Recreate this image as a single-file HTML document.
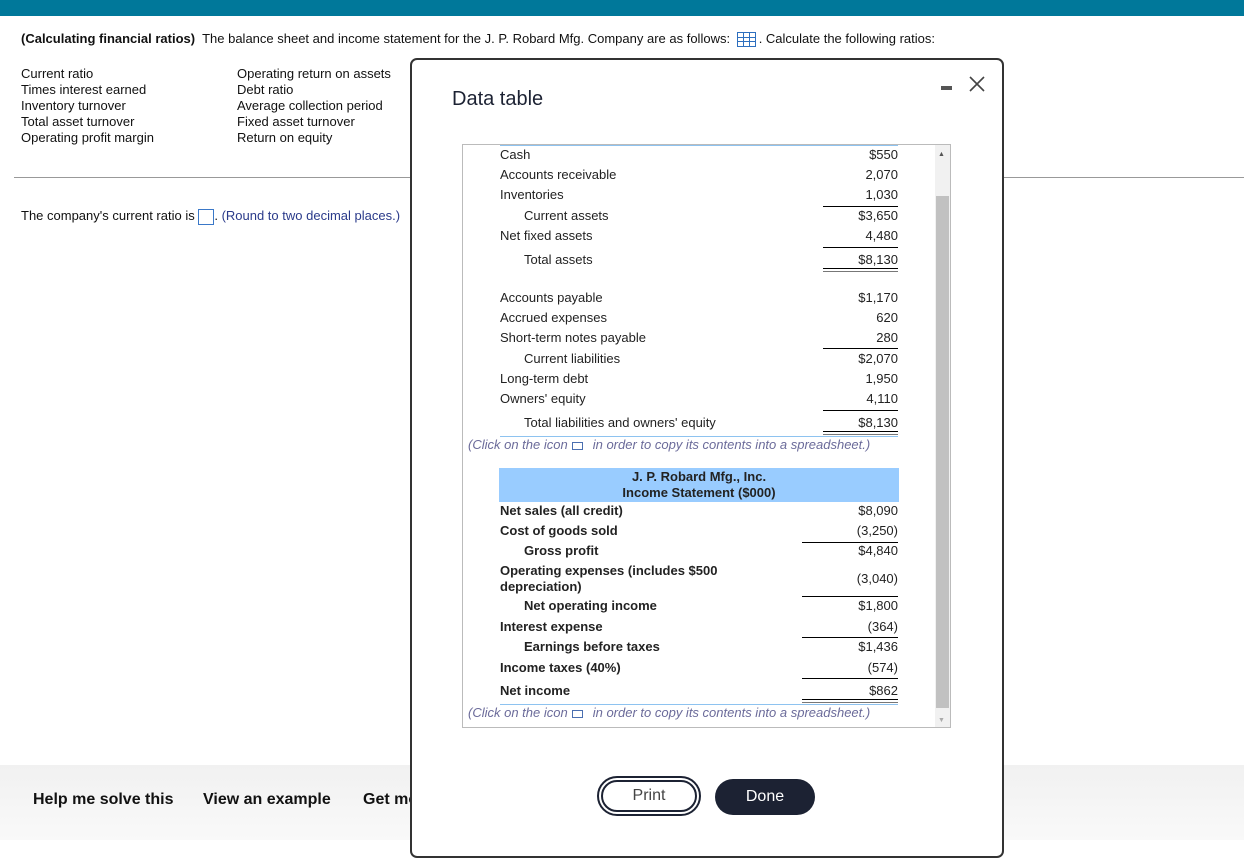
<!DOCTYPE html>
<html><head><meta charset="utf-8"><style>
body{margin:0;width:1244px;height:840px;position:relative;overflow:hidden;background:#fff;font-family:"Liberation Sans",Arial,sans-serif;color:#222;}
.a{position:absolute;white-space:nowrap;font-size:13px;line-height:16px;}
.r{text-align:right;width:120px;}
.ln{position:absolute;height:0;border-top:1px solid #000;}
.dl{position:absolute;height:2px;border-top:1px solid #000;border-bottom:1px solid #777;}
.b{font-weight:bold;}
.cl{position:absolute;font-size:13px;font-style:italic;color:#6b6b9a;white-space:nowrap;}
.ic{display:inline-block;width:9px;height:6px;border:1.5px solid #4a6fb0;margin:0 10px 0 4px;vertical-align:middle;}
</style></head><body>
<div style="position:absolute;left:0;top:0;width:1244px;height:16px;background:#00789a"></div>
<div class="a" style="left:21px;top:31px;color:#111"><b>(Calculating financial ratios)</b>&nbsp; The balance sheet and income statement for the J. P. Robard Mfg. Company are as follows: <span style="display:inline-block;width:17px;height:13px;border:1px solid #2d6fbf;background:linear-gradient(#2d6fbf,#2d6fbf) 0 4px/100% 1px no-repeat,linear-gradient(#2d6fbf,#2d6fbf) 0 8px/100% 1px no-repeat,linear-gradient(90deg,#2d6fbf,#2d6fbf) 5px 0/1px 100% no-repeat,linear-gradient(90deg,#2d6fbf,#2d6fbf) 11px 0/1px 100% no-repeat;vertical-align:middle;margin:0 3px"></span>. Calculate the following ratios:</div>
<div class="a" style="left:21px;top:66px;line-height:16px;color:#111">Current ratio<br>Times interest earned<br>Inventory turnover<br>Total asset turnover<br>Operating profit margin</div>
<div class="a" style="left:237px;top:66px;line-height:16px;color:#111">Operating return on assets<br>Debt ratio<br>Average collection period<br>Fixed asset turnover<br>Return on equity</div>
<div style="position:absolute;left:14px;top:177px;width:1230px;border-top:1px solid #999"></div>
<div class="a" style="left:21px;top:208px;color:#111">The company's current ratio is <span style="display:inline-block;width:16px;height:16px;border:1px solid #3a78c8;vertical-align:middle;box-sizing:border-box"></span>. <span style="color:#2a3a8a">(Round to two decimal places.)</span></div>
<div style="position:absolute;left:0;top:765px;width:1244px;height:75px;background:linear-gradient(#f1f1f1,#f9f9f9)"></div>
<div class="a b" style="left:33px;top:791px;font-size:16px;line-height:18px;color:#111">Help me solve this</div>
<div class="a b" style="left:203px;top:791px;font-size:16px;line-height:18px;color:#111">View an example</div>
<div class="a b" style="left:363px;top:791px;font-size:16px;line-height:18px;color:#111">Get more help</div>
<div style="position:absolute;left:410px;top:58px;width:594px;height:800px;background:#fff;border:2px solid #333;border-radius:7px;box-sizing:border-box"></div>
<div class="a" style="left:452px;top:88px;font-size:20px;line-height:22px;color:#1c2233">Data table</div>
<div style="position:absolute;left:941px;top:86px;width:11px;height:4px;background:#555"></div>
<svg style="position:absolute;left:968px;top:75px" width="18" height="18" viewBox="0 0 18 18"><path d="M2 2L16 16M16 2L2 16" stroke="#444" stroke-width="1.6" fill="none"/></svg>
<div style="position:absolute;left:462px;top:144px;width:489px;height:584px;border:1px solid #bbb;box-sizing:border-box"></div>
<div style="position:absolute;left:935px;top:145px;width:15px;height:582px;background:#f1f1f1"></div>
<div style="position:absolute;left:936px;top:196px;width:13px;height:512px;background:#c1c1c1"></div>
<div class="a" style="left:938px;top:147px;font-size:7px;color:#555">▲</div>
<div class="a" style="left:938px;top:713px;font-size:7px;color:#aaa">▼</div>
<div style="position:absolute;left:500px;top:145px;width:398px;border-top:1px solid #8ec3f0"></div>
<div class="a" style="left:500px;top:147px">Cash</div><div class="a r" style="left:778px;top:147px">$550</div>
<div class="a" style="left:500px;top:167px">Accounts receivable</div><div class="a r" style="left:778px;top:167px">2,070</div>
<div class="a" style="left:500px;top:187px">Inventories</div><div class="a r" style="left:778px;top:187px">1,030</div>
<div class="ln" style="left:823px;top:206px;width:75px"></div>
<div class="a" style="left:524px;top:208px">Current assets</div><div class="a r" style="left:778px;top:208px">$3,650</div>
<div class="a" style="left:500px;top:228px">Net fixed assets</div><div class="a r" style="left:778px;top:228px">4,480</div>
<div class="ln" style="left:823px;top:247px;width:75px"></div>
<div class="a" style="left:524px;top:252px">Total assets</div><div class="a r" style="left:778px;top:252px">$8,130</div>
<div class="dl" style="left:823px;top:268px;width:75px"></div>
<div class="a" style="left:500px;top:290px">Accounts payable</div><div class="a r" style="left:778px;top:290px">$1,170</div>
<div class="a" style="left:500px;top:310px">Accrued expenses</div><div class="a r" style="left:778px;top:310px">620</div>
<div class="a" style="left:500px;top:330px">Short-term notes payable</div><div class="a r" style="left:778px;top:330px">280</div>
<div class="ln" style="left:823px;top:348px;width:75px"></div>
<div class="a" style="left:524px;top:351px">Current liabilities</div><div class="a r" style="left:778px;top:351px">$2,070</div>
<div class="a" style="left:500px;top:371px">Long-term debt</div><div class="a r" style="left:778px;top:371px">1,950</div>
<div class="a" style="left:500px;top:391px">Owners' equity</div><div class="a r" style="left:778px;top:391px">4,110</div>
<div class="ln" style="left:823px;top:410px;width:75px"></div>
<div class="a" style="left:524px;top:415px">Total liabilities and owners' equity</div><div class="a r" style="left:778px;top:415px">$8,130</div>
<div class="dl" style="left:823px;top:431px;width:75px"></div>
<div style="position:absolute;left:500px;top:436px;width:398px;border-top:1px solid #8ec3f0"></div>
<div class="cl" style="left:468px;top:437px">(Click on the icon<span class="ic"></span>in order to copy its contents into a spreadsheet.)</div>
<div style="position:absolute;left:499px;top:468px;width:400px;height:34px;background:#99ccff"></div>
<div class="a b" style="left:499px;top:469px;width:400px;text-align:center;line-height:16px">J. P. Robard Mfg., Inc.<br>Income Statement ($000)</div>
<div class="a b" style="left:500px;top:503px">Net sales (all credit)</div><div class="a r" style="left:778px;top:503px">$8,090</div>
<div class="a b" style="left:500px;top:523px">Cost of goods sold</div><div class="a r" style="left:778px;top:523px">(3,250)</div>
<div class="ln" style="left:802px;top:542px;width:96px"></div>
<div class="a b" style="left:524px;top:543px">Gross profit</div><div class="a r" style="left:778px;top:543px">$4,840</div>
<div class="a b" style="left:500px;top:563px;line-height:16px">Operating expenses (includes $500<br>depreciation)</div><div class="a r" style="left:778px;top:571px">(3,040)</div>
<div class="ln" style="left:802px;top:596px;width:96px"></div>
<div class="a b" style="left:524px;top:598px">Net operating income</div><div class="a r" style="left:778px;top:598px">$1,800</div>
<div class="a b" style="left:500px;top:619px">Interest expense</div><div class="a r" style="left:778px;top:619px">(364)</div>
<div class="ln" style="left:802px;top:637px;width:96px"></div>
<div class="a b" style="left:524px;top:639px">Earnings before taxes</div><div class="a r" style="left:778px;top:639px">$1,436</div>
<div class="a b" style="left:500px;top:660px">Income taxes (40%)</div><div class="a r" style="left:778px;top:660px">(574)</div>
<div class="ln" style="left:802px;top:678px;width:96px"></div>
<div class="a b" style="left:500px;top:683px">Net income</div><div class="a r" style="left:778px;top:683px">$862</div>
<div class="dl" style="left:802px;top:699px;width:96px"></div>
<div style="position:absolute;left:500px;top:704px;width:398px;border-top:1px solid #8ec3f0"></div>
<div class="cl" style="left:468px;top:705px">(Click on the icon<span class="ic"></span>in order to copy its contents into a spreadsheet.)</div>
<div style="position:absolute;left:597px;top:776px;width:104px;height:40px;border:2px solid #1c2233;border-radius:20px;box-sizing:border-box;padding:2px"><div style="width:100%;height:100%;border:2px solid #1c2233;border-radius:16px;box-sizing:border-box;text-align:center;line-height:28px;font-size:16px;color:#444">Print</div></div>
<div style="position:absolute;left:715px;top:779px;width:100px;height:36px;border-radius:18px;background:#1c2233;color:#fff;text-align:center;line-height:36px;font-size:16px">Done</div>
</body></html>
